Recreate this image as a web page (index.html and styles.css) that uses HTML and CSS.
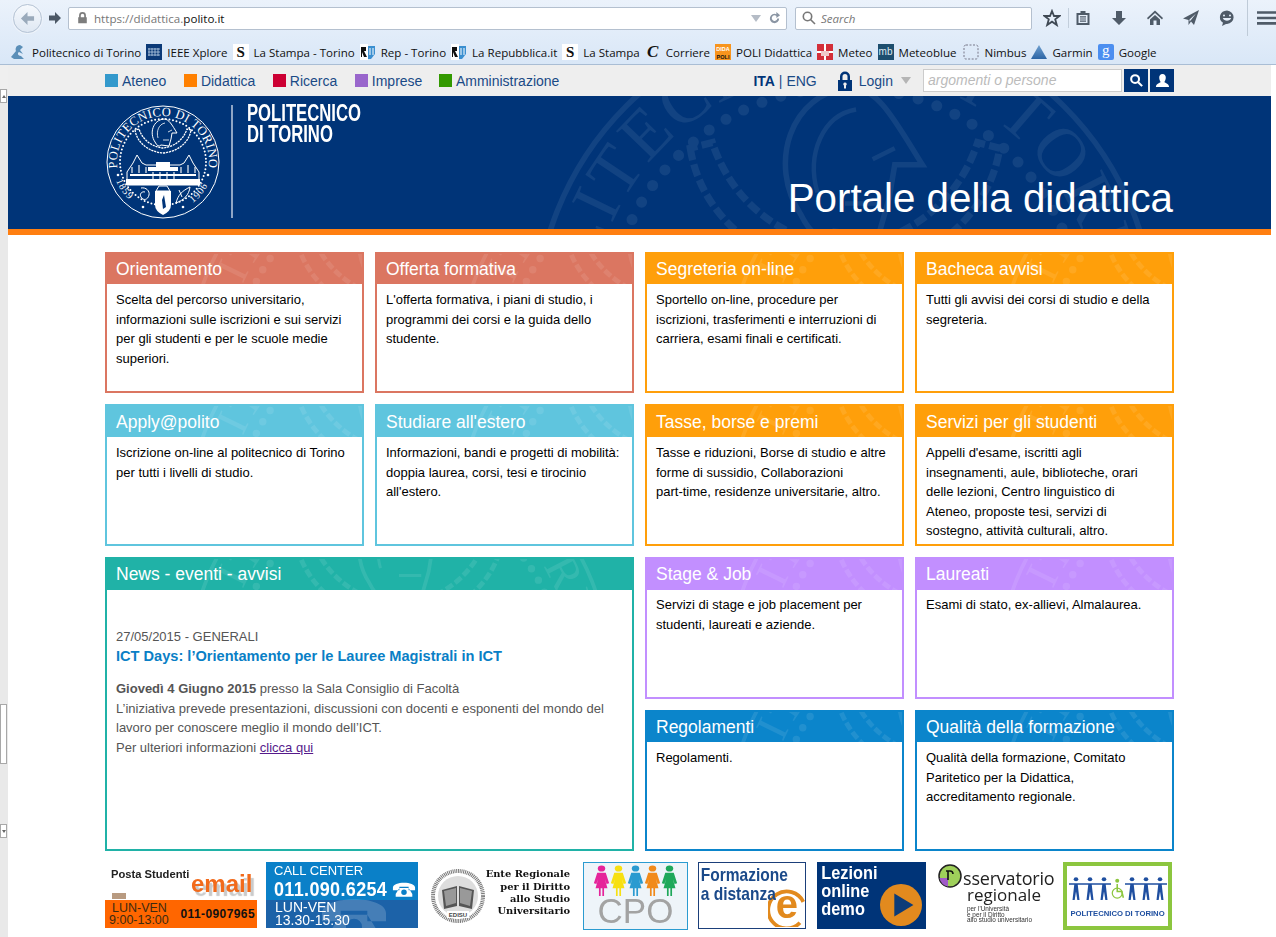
FILE: index.html
```html
<!DOCTYPE html>
<html lang="it">
<head>
<meta charset="utf-8">
<title>Portale della didattica</title>
<link rel="stylesheet" href="styles.css">
</head>
<body>
<svg class="defs" aria-hidden="true">
  <symbol id="seal" viewBox="0 0 114 114">
    <circle cx="57" cy="57" r="56" fill="none" stroke="currentColor" stroke-width="1"/>
    <circle cx="57" cy="57" r="43" fill="none" stroke="currentColor" stroke-width="2" stroke-linecap="round" stroke-dasharray="0 3.6"/>
    <path id="sealTop" d="M11.7 65A46 46 0 1 1 102.3 65" fill="none"/>
    <path id="sealLow" d="M7 62A50.2 50.2 0 0 0 107 62" fill="none"/>
    <text class="seal-text" fill="currentColor"><textPath href="#sealTop" startOffset="2" textLength="156">POLITECNICO DI TORINO</textPath></text>
    <text class="seal-year" fill="currentColor"><textPath href="#sealLow" startOffset="14">1859</textPath></text>
    <text class="seal-year" fill="currentColor"><textPath href="#sealLow" startOffset="106">1906</textPath></text>
    <path d="M49 37C43 28 47 15 58 14C63 14 66 20 71 28L66 28L65 34L63 41L55 40Q52 43 49 37Z" fill="none" stroke="currentColor" stroke-width="1"/>
    <path d="M52 33C50 26 53 19 59 18M62 27L66 25M57 35L63 35" fill="none" stroke="currentColor" stroke-width=".8"/>
    <path d="M29 25C31 38 43 47 57 48C71 47 83 38 85 25L81 24C77 36 67 42 57 43C47 42 37 36 33 24Z" fill="none" stroke="currentColor" stroke-width="1.3" stroke-dasharray="2.2 .8"/>
    <path d="M21 80V67L27 58L31 50L36 58L40 60H74L78 58L83 50L87 58L93 67V80Z" fill="none" stroke="currentColor" stroke-width="1"/>
    <path d="M20 80H94V74H20ZM24 71H90V69H24ZM42 66H72V62H42ZM50 62H64V57H50Z" fill="currentColor"/>
    <path d="M26 62V68M33 60V68M40 62V68M47 67V74M54 67V74M61 67V74M68 67V74M75 62V68M82 60V68M89 62V68" stroke="currentColor" stroke-width="1.1"/>
    <path d="M49 86H65V100Q65 106 57 110Q49 106 49 100Z" fill="currentColor"/>
    <path d="M50 86L53 81H61L64 86Z" fill="none" stroke="currentColor" stroke-width="1"/>
    <path d="M58 90L60 102L57 104L56 95Z" fill="#003478"/>
    <path d="M35 83C40 82 44 86 43 90C42 95 37 96 35 92C33 89 36 86 39 87" fill="none" stroke="currentColor" stroke-width="1"/>
    <path d="M70 98C72 90 76 86 84 82C83 90 78 95 70 98ZM73 85L76 92" fill="none" stroke="currentColor" stroke-width="1"/>
    <circle cx="12" cy="70" r="1.3" fill="currentColor"/><circle cx="102" cy="70" r="1.3" fill="currentColor"/>
    <circle cx="37" cy="102" r="1.3" fill="currentColor"/><circle cx="77" cy="102" r="1.3" fill="currentColor"/>
  </symbol>
  <symbol id="person" viewBox="0 0 20 44" preserveAspectRatio="none">
    <circle cx="10" cy="5" r="4.4" fill="currentColor"/>
    <path d="M5 11H15L19 26L16 27L14 20L17 33H13V44H11V33H9V44H7V33H3L6 20L4 27L1 26Z" fill="currentColor"/>
  </symbol>
  <symbol id="stick" viewBox="0 0 16 30" preserveAspectRatio="none">
    <circle cx="8" cy="3" r="2.6" fill="currentColor"/>
    <path d="M0 8H16V10H10L12 30H9.5L8 19L6.5 30H4L6 10H0Z" fill="currentColor"/>
  </symbol>
</svg>

<header class="chrome">
  <div class="toolbar">
    <div class="back"><svg class="back-arrow" viewBox="0 0 16 16"><path d="M8 1L1 8L8 15V10.5H15V5.5H8Z"/></svg></div>
    <svg class="fwd" viewBox="0 0 14 14"><path d="M7 1L13 7L7 13V9.5H1V4.5H7Z"/></svg>
    <div class="urlbar">
      <svg class="padlock" viewBox="0 0 12 14"><path d="M1 6H2V4A4 4 0 0 1 10 4V6H11V13H1ZM4 6H8V4A2 2 0 0 0 4 4Z"/></svg>
      <span class="url">https://didattica.<b>polito.it</b></span>
      <svg class="drop" viewBox="0 0 10 7"><path d="M0 0H10L5 7Z"/></svg>
      <svg class="reload" viewBox="0 0 14 14"><path d="M12 7A5 5 0 1 1 9 2.4V0L13 3.4L9 6.5V4.3A3 3 0 1 0 10 7Z"/></svg>
    </div>
    <div class="searchbar">
      <svg class="loupe" viewBox="0 0 14 14"><circle cx="5.5" cy="5.5" r="4.2"/><path d="M8.5 8.5L13 13"/></svg>
      <span>Search</span>
    </div>
    <div class="tools">
      <svg class="tool" viewBox="0 0 18 18"><path class="outline" d="M9 2L11 7H16.5L12.2 10.3L13.8 16L9 12.7L4.2 16L5.8 10.3L1.5 7H7Z"/></svg>
      <i class="tool-sep"></i>
      <svg class="tool" viewBox="0 0 18 18"><path d="M2.500 4H6.500V2H11.500V4H15.500V16H2.500ZM4.500 6V14H13.500V6ZM6 7.200H12V8.400H6ZM6 9.400H12V10.600H6ZM6 11.600H12V12.800H6Z"/></svg>
      <svg class="tool" viewBox="0 0 18 18"><path d="M6 2H12V9H16L9 16L2 9H6Z"/></svg>
      <svg class="tool" viewBox="0 0 18 18"><path d="M9 1.500L17 9L16 10.500L9 4L2 10.500L1 9ZM4 10.500L9 6L14 10.500V16H10.500V11.500H7.500V16H4Z"/></svg>
      <svg class="tool" viewBox="0 0 18 18"><path d="M17 1L12 16L9 12.500L6.500 16V11L1 9.500ZM7.500 10.500V12.500L9 11L14 4.500Z"/></svg>
      <svg class="tool" viewBox="0 0 18 18"><path d="M9 1.500A7.500 6.800 0 0 1 9 15H8L4 17L5 13.800A7.500 6.800 0 0 1 9 1.500ZM6 5.500A1 1 0 1 0 6 7.500A1 1 0 1 0 6 5.500ZM12 5.500A1 1 0 1 0 12 7.500A1 1 0 1 0 12 5.500ZM4.800 9C6 12.500 12 12.500 13.200 9Z" fill-rule="evenodd"/></svg>
      <i class="tool-sep tall"></i>
      <svg class="tool menu" viewBox="0 0 18 16"><path d="M0 1.500H18V4H0ZM0 6.700H18V9.200H0ZM0 11.900H18V14.400H0Z"/></svg>
    </div>
  </div>
  <nav class="bookmarks">
    <a class="bm bm-first"><svg class="fav" viewBox="0 0 16 16"><path d="M10 1C6 1 5 5 6 7L1 13L4 15H14L11 12C8 12 7 9 9 8L13 10L10 6L13 3Z" fill="#5b8fb8"/></svg>Politecnico di Torino</a>
    <a class="bm"><svg class="fav" viewBox="0 0 16 16"><rect width="16" height="16" fill="#0b3a78"/><path d="M3 4V12M6 4V12M9 4V12M12 4V12M2 5H14M2 8H14M2 11H14" stroke="#b9cfe6" stroke-width=".8"/></svg>IEEE Xplore</a>
    <a class="bm"><span class="fav-s">S</span>La Stampa - Torino</a>
    <a class="bm"><svg class="fav" viewBox="0 0 16 16"><rect width="8" height="16" fill="#fff"/><path d="M1 3H6V7H4L7 13H4L2 8V13H1Z" fill="#111"/><path d="M8 2H15V10L11 15H8Z" fill="#3a8fd0"/><path d="M10 4V11M13 4V11" stroke="#fff"/></svg>Rep - Torino</a>
    <a class="bm"><svg class="fav" viewBox="0 0 16 16"><rect width="8" height="16" fill="#fff"/><path d="M1 3H6V7H4L7 13H4L2 8V13H1Z" fill="#111"/><path d="M8 2H15V10L11 15H8Z" fill="#3a8fd0"/><path d="M10 4V11M13 4V11" stroke="#fff"/></svg>La Repubblica.it</a>
    <a class="bm"><span class="fav-s">S</span>La Stampa</a>
    <a class="bm"><span class="fav-c">C</span>Corriere</a>
    <a class="bm"><svg class="fav" viewBox="0 0 16 16"><rect width="16" height="16" fill="#f7941d"/><text x="8" y="7" class="fav-mini" fill="#fff">DIDA</text><text x="8" y="14.500" class="fav-mini" fill="#111">POLI</text></svg>POLI Didattica</a>
    <a class="bm"><svg class="fav" viewBox="0 0 16 16"><rect width="16" height="16" fill="#d32f3a"/><path d="M0 7H16V9H0ZM7 0H9V16H7Z" fill="#fff"/><path d="M4 7H12V12H4Z" fill="#f0c8c8"/></svg>Meteo</a>
    <a class="bm bm-wide"><span class="fav-mb">mb</span>Meteoblue</a>
    <a class="bm"><svg class="fav" viewBox="0 0 16 16"><rect x="1" y="1" width="14" height="14" rx="2" fill="none" stroke="#778" stroke-dasharray="2 1.500"/></svg>Nimbus</a>
    <a class="bm"><svg class="fav" viewBox="0 0 16 16"><defs><linearGradient id="garmin" x1="0" y1="0" x2="0" y2="1"><stop offset="0" stop-color="#6fa0d0"/><stop offset="1" stop-color="#2c65a5"/></linearGradient></defs><path d="M8 1L16 15H0Z" fill="url(#garmin)"/></svg>Garmin</a>
    <a class="bm"><span class="fav-g">g</span>Google</a>
  </nav>
</header>

<div class="viewport">
  <aside class="scroll">
    <div class="sb-top"></div>
    <div class="sb-btn sb-up"></div>
    <div class="sb-track1"></div>
    <div class="sb-thumb"></div>
    <div class="sb-track2"></div>
    <div class="sb-btn sb-down"></div>
  </aside>

  <div class="site">
    <div class="topnav">
      <ul class="sections">
        <li class="sec"><i class="sq sq-ateneo"></i>Ateneo</li>
        <li class="sec"><i class="sq sq-didattica"></i>Didattica</li>
        <li class="sec"><i class="sq sq-ricerca"></i>Ricerca</li>
        <li class="sec sec-imp"><i class="sq sq-imprese"></i>Imprese</li>
        <li class="sec"><i class="sq sq-amm"></i>Amministrazione</li>
      </ul>
      <div class="lang"><b>ITA</b> | ENG</div>
      <div class="login">
        <svg class="lock" viewBox="0 0 16 20"><path d="M1 9H3V5.500A5 5 0 0 1 13 5.500V9H15V20H1ZM5.500 9H10.500V5.500A2.500 2.500 0 0 0 5.500 5.500ZM8 11.500A1.700 1.700 0 0 0 7 14.600V17.500H9V14.600A1.700 1.700 0 0 0 8 11.500Z" fill-rule="evenodd"/></svg>
        <span>Login</span>
        <i class="caret"></i>
      </div>
      <div class="sitesearch">argomenti o persone</div>
      <div class="sq-btn"><svg viewBox="0 0 16 16"><circle cx="6.500" cy="6.500" r="4.200"/><path d="M9.800 9.800L14 14"/></svg></div>
      <div class="sq-btn"><svg viewBox="0 0 16 16"><path class="solid" d="M8 1C10.500 1 11.500 3 11.500 5C11.500 7 10.500 8.500 10 9.500C11 11 15 11 15 15H1C1 11 5 11 6 9.500C5.500 8.500 4.500 7 4.500 5C4.500 3 5.500 1 8 1Z"/></svg></div>
    </div>

    <div class="banner">
      <svg class="wm-big" aria-hidden="true"><use href="#seal"/></svg>
      <svg class="logo-seal" aria-hidden="true"><use href="#seal"/></svg>
      <i class="logo-rule"></i>
      <div class="logo-name">POLITECNICO<br>DI TORINO</div>
      <h1 class="portal">Portale della didattica</h1>
    </div>

    <main class="grid">
      <section class="card c-red"><h2><svg class="wm" aria-hidden="true"><use href="#seal"/></svg><span>Orientamento</span></h2><p>Scelta del percorso universitario, informazioni sulle iscrizioni e sui servizi per gli studenti e per le scuole medie superiori.</p></section>
      <section class="card c-red"><h2><svg class="wm" aria-hidden="true"><use href="#seal"/></svg><span>Offerta formativa</span></h2><p>L'offerta formativa, i piani di studio, i programmi dei corsi e la guida dello studente.</p></section>
      <section class="card c-orange"><h2><svg class="wm" aria-hidden="true"><use href="#seal"/></svg><span>Segreteria on-line</span></h2><p>Sportello on-line, procedure per iscrizioni, trasferimenti e interruzioni di carriera, esami finali e certificati.</p></section>
      <section class="card c-orange"><h2><svg class="wm" aria-hidden="true"><use href="#seal"/></svg><span>Bacheca avvisi</span></h2><p>Tutti gli avvisi dei corsi di studio e della segreteria.</p></section>

      <section class="card row2 c-cyan"><h2><svg class="wm" aria-hidden="true"><use href="#seal"/></svg><span>Apply@polito</span></h2><p>Iscrizione on-line al politecnico di Torino per tutti i livelli di studio.</p></section>
      <section class="card row2 c-cyan"><h2><svg class="wm" aria-hidden="true"><use href="#seal"/></svg><span>Studiare all'estero</span></h2><p>Informazioni, bandi e progetti di mobilità: doppia laurea, corsi, tesi e tirocinio all'estero.</p></section>
      <section class="card row2 c-orange"><h2><svg class="wm" aria-hidden="true"><use href="#seal"/></svg><span>Tasse, borse e premi</span></h2><p>Tasse e riduzioni, Borse di studio e altre forme di sussidio, Collaborazioni<br>part-time, residenze universitarie, altro.</p></section>
      <section class="card row2 c-orange"><h2><svg class="wm" aria-hidden="true"><use href="#seal"/></svg><span>Servizi per gli studenti</span></h2><p>Appelli d'esame, iscritti agli<br>insegnamenti, aule, biblioteche, orari<br>delle lezioni, Centro linguistico di<br>Ateneo, proposte tesi, servizi di<br>sostegno, attività culturali, altro.</p></section>

      <section class="card row3 c-teal news"><h2><svg class="wm" aria-hidden="true"><use href="#seal"/></svg><span>News - eventi - avvisi</span></h2>
        <div class="news-body">
          <div class="news-date">27/05/2015 - GENERALI</div>
          <a class="news-title">ICT Days: l’Orientamento per le Lauree Magistrali in ICT</a>
          <p class="news-text"><b>Giovedì 4 Giugno 2015</b> presso la Sala Consiglio di Facoltà<br>L’iniziativa prevede presentazioni, discussioni con docenti e esponenti del mondo del lavoro per conoscere meglio il mondo dell’ICT.<br>Per ulteriori informazioni <a class="news-link">clicca qui</a></p>
        </div>
      </section>
      <section class="card row3 c-purple"><h2><svg class="wm" aria-hidden="true"><use href="#seal"/></svg><span>Stage &amp; Job</span></h2><p>Servizi di stage e job placement per studenti, laureati e aziende.</p></section>
      <section class="card row3 c-purple"><h2><svg class="wm" aria-hidden="true"><use href="#seal"/></svg><span>Laureati</span></h2><p>Esami di stato, ex-allievi, Almalaurea.</p></section>
      <section class="card c-blue"><h2><svg class="wm" aria-hidden="true"><use href="#seal"/></svg><span>Regolamenti</span></h2><p>Regolamenti.</p></section>
      <section class="card c-blue"><h2><svg class="wm" aria-hidden="true"><use href="#seal"/></svg><span>Qualità della formazione</span></h2><p>Qualità della formazione, Comitato Paritetico per la Didattica, accreditamento regionale.</p></section>
    </main>

    <footer class="links">
      <div class="b b-email">
        <div class="em-top"><span class="em-posta">Posta Studenti</span><span class="em-word">email</span><i class="em-icon"></i></div>
        <div class="em-bar"><span class="em-hours">LUN-VEN<br><span class="em-time">9:00-13:00</span></span><b>011-0907965</b></div>
      </div>
      <div class="b b-call">
        <div class="cc-top">CALL CENTER<br><span class="cc-num">011.090.6254</span></div>
        <svg class="cc-phone" viewBox="0 0 26 18"><path d="M1 8C1 1 25 1 25 8V11H18V7H8V11H1ZM8 8.500H18L22 15V18H4V15ZM13 10A3 3 0 1 0 13 16A3 3 0 1 0 13 10Z" fill-rule="evenodd"/></svg>
        <svg class="cc-bigphone" viewBox="0 0 26 18"><path d="M1 8C1 1 25 1 25 8V11H18V7H8V11H1ZM8 8.500H18L22 15V18H4V15ZM13 10A3 3 0 1 0 13 16A3 3 0 1 0 13 10Z" fill-rule="evenodd"/></svg>
        <div class="cc-low">LUN-VEN<br>13.30-15.30</div>
      </div>
      <div class="b b-edisu">
        <svg class="ed-seal" viewBox="0 0 54 54"><circle cx="27" cy="27" r="25" fill="none" stroke="#777" stroke-width="4" stroke-dasharray="1 .8"/><circle cx="27" cy="27" r="20" fill="#ddd"/><path d="M11 21L26 17V37L13 40ZM28 17L43 21L41 40L28 37Z" fill="#555"/><path d="M13 22L25 19V34L15 37ZM29 19L41 22L39 37L29 34Z" fill="#999"/><rect x="16" y="42" width="22" height="7" fill="#fff"/><text x="27" y="48" class="ed-mark">EDISU</text></svg>
        <div class="ed-text">Ente Regionale<br>per il Diritto<br>allo Studio<br>Universitario</div>
      </div>
      <div class="b b-cpo">
        <div class="cpo-row">
          <svg class="cpo-p p1"><use href="#person"/></svg><svg class="cpo-p p2"><use href="#person"/></svg><svg class="cpo-p p3"><use href="#person"/></svg><svg class="cpo-p p4"><use href="#person"/></svg><svg class="cpo-p p5"><use href="#person"/></svg>
        </div>
        <div class="cpo-word">CPO</div>
      </div>
      <div class="b b-fad">
        <svg class="fad-ring" viewBox="0 0 44 50"><path d="M38 45A22 22 0 1 1 42 20" fill="none" stroke="#e28a1e" stroke-width="4.500"/></svg>
        <div class="fad-e">e</div>
        <div class="fad-text">Formazione<br>a distanza</div>
      </div>
      <div class="b b-lez">
        <div class="lez-text">Lezioni<br>online<br>demo</div>
        <svg class="lez-play" viewBox="0 0 44 44"><circle cx="22" cy="22" r="22" fill="#e28a1e"/><path d="M15 10L35 22L15 34Z" fill="#0d3c78"/></svg>
      </div>
      <div class="b b-oss">
        <div class="oss-head">
          <svg class="oss-o" viewBox="0 0 24 24"><circle cx="12" cy="12" r="11" fill="#9fd05a" stroke="#222" stroke-width="1.500"/><path d="M1.500 14H10V22.500A11 11 0 0 1 1.500 14Z" fill="#a05ac8"/><path d="M8 7H12Q15 7 15 10M10 7V16" fill="none" stroke="#111" stroke-width="1.600"/></svg>
          <span>sservatorio</span>
        </div>
        <div class="oss-word">regionale</div>
        <div class="oss-small">per l'Università<br>e per il Diritto<br>allo studio universitario</div>
      </div>
      <div class="b b-poli">
        <div class="poli-row">
          <svg class="st"><use href="#stick"/></svg><svg class="st"><use href="#stick"/></svg><svg class="st"><use href="#stick"/></svg>
          <svg class="wheel" viewBox="0 0 16 30"><circle cx="7" cy="5" r="2.600" fill="#8cc63f"/><path d="M7 9V19H13L15 27" fill="none" stroke="#8cc63f" stroke-width="2"/><circle cx="7" cy="21" r="6.500" fill="none" stroke="#8cc63f" stroke-width="1.600"/></svg>
          <svg class="st"><use href="#stick"/></svg><svg class="st"><use href="#stick"/></svg><svg class="st"><use href="#stick"/></svg>
        </div>
        <div class="poli-word">POLITECNICO DI TORINO</div>
      </div>
    </footer>
  </div>
</div>
</body>
</html>
```

FILE: styles.css
```css
* { box-sizing: border-box; }
html, body { margin: 0; height: 937px; overflow: hidden; background: #fff; }
body { font-family: "Liberation Sans", Arial, sans-serif; color: #000; }
.defs { position: absolute; width: 0; height: 0; }
ul { list-style: none; margin: 0; padding: 0; }
.seal-text { font: 12.5px "Liberation Serif", serif; }
.seal-year { font: 10px "Liberation Serif", serif; letter-spacing: 1px; }

/* browser chrome */
.chrome { height: 65px; background: linear-gradient(#ebf2fb, #d9e7f7); border-bottom: 1px solid #a9bdd4; }
.toolbar { height: 40px; display: flex; align-items: center; padding: 0 0 4px 13px; }
.back { width: 29px; height: 29px; flex: none; border-radius: 50%; border: 1px solid #b5c3d4; background: linear-gradient(#f6f9fd, #dfe8f3); display: flex; align-items: center; justify-content: center; box-shadow: 0 0 0 1px #eef3fa; }
.back-arrow { width: 15px; height: 15px; fill: #9aaabb; }
.fwd { width: 14px; height: 14px; flex: none; fill: #4c5866; margin: 0 5px 0 6px; }
.urlbar { width: 719px; height: 23px; flex: none; margin-left: 1px; background: #fff; border: 1px solid #b4c0cf; border-radius: 2px; display: flex; align-items: center; padding: 0 5px 0 8px; }
.padlock { width: 11px; height: 12px; fill: #7d7d7d; margin-right: 6px; }
.url { flex: 1; font: 11.6px "Open Sans", sans-serif; color: #777; }
.url b { font-weight: 400; color: #111; }
.drop { width: 10px; height: 7px; fill: #b5bcc6; margin-right: 7px; }
.reload { width: 13px; height: 13px; fill: #8a95a3; }
.searchbar { width: 237px; height: 23px; flex: none; margin-left: 8px; background: #fff; border: 1px solid #b4c0cf; border-radius: 2px; display: flex; align-items: center; padding: 0 6px; gap: 5px; font: italic 11.5px "Open Sans", sans-serif; color: #777; }
.loupe { width: 14px; height: 14px; fill: none; stroke: #777; stroke-width: 1.6; }
.tools { display: flex; align-items: center; margin-left: 11px; }
.tool { width: 18px; height: 18px; fill: #4f5b68; margin-right: 18px; flex: none; }
.tool .outline { fill: none; stroke: #3f4954; stroke-width: 1.8; }
.tool-sep { width: 1px; height: 20px; background: #c2cedb; margin: 0 5px 0 -11px; flex: none; }
.tool-sep.tall { height: 36px; margin: 0 9px 0 -7px; background: #bfcbd8; }
.tool.menu { margin: 0; width: 19px; }

.bookmarks { height: 24px; display: flex; align-items: center; padding-left: 10px; font: 11.55px "Open Sans", sans-serif; color: #111; }
.bm { display: flex; align-items: center; gap: 5px; margin-right: 5px; white-space: nowrap; }
.bm-first { gap: 6px; }
.bm-wide { margin-right: 7px; }
.fav { width: 16px; height: 16px; flex: none; }
.fav-mini { font: bold 5.5px "Liberation Sans", sans-serif; text-anchor: middle; }
.fav-s { width: 16px; height: 16px; background: #fff; font: bold 15px/16px "Liberation Serif", serif; text-align: center; }
.fav-c { width: 16px; height: 16px; font: italic bold 17px/16px "Liberation Serif", serif; text-align: center; }
.fav-mb { width: 16px; height: 16px; background: #1d4e6e; color: #dfe9ef; font: 10px/16px "Liberation Sans", sans-serif; text-align: center; }
.fav-g { width: 16px; height: 16px; border-radius: 2px; background: #4b8ef0; color: #fff; font: 15px/13px "Liberation Serif", serif; text-align: center; }

/* window */
.viewport { display: flex; height: 872px; }
.scroll { width: 8px; flex: none; display: flex; flex-direction: column; background: #e9e9e9; }
.sb-top { height: 24px; background: #efefef; }
.sb-btn { height: 14px; width: 7px; background: #fff; border: 1px solid #a8a8a8; flex: none; display: flex; align-items: center; justify-content: center; }
.sb-btn::after { content: ""; border: 2px solid transparent; border-bottom: 3px solid #666; border-top: 0; }
.sb-down::after { border-top: 3px solid #666; border-bottom: 0; }
.sb-track1 { height: 601px; flex: none; }
.sb-thumb { height: 60px; width: 7px; background: #fff; border: 1px solid #a8a8a8; flex: none; }
.sb-track2 { height: 60px; flex: none; }
.site { width: 1263px; flex: none; }

.topnav { height: 31px; background: #eee; display: flex; align-items: center; padding: 0 97px; font-size: 14px; color: #1a4a86; }
.sections { display: flex; flex: 1; gap: 17.5px; }
.sec { display: flex; align-items: center; gap: 4px; }
.sec-imp { margin-right: -1px; }
.sq { width: 13px; height: 13px; display: block; }
.sq-ateneo { background: #3399cc; }
.sq-didattica { background: #ff8000; }
.sq-ricerca { background: #cc0033; }
.sq-imprese { background: #9966cc; }
.sq-amm { background: #339900; }
.lang { margin-right: 20px; }
.lang b { color: #003478; }
.login { display: flex; align-items: center; margin-right: 12px; }
.lock { width: 16px; height: 20px; fill: #003478; margin-right: 6px; }
.caret { width: 0; height: 0; margin-left: 8px; border: 5.5px solid transparent; border-top: 7px solid #b5b5b5; border-bottom: 0; }
.sitesearch { width: 199px; height: 23px; background: #fff; border: 1px solid #ccc; font: italic 14px/21px "Liberation Sans", sans-serif; color: #bbb; padding-left: 4px; margin-right: 2px; }
.sq-btn { width: 24px; height: 23px; background: #003478; display: flex; align-items: center; justify-content: center; }
.sq-btn + .sq-btn { margin-left: 2px; }
.sq-btn svg { width: 15px; height: 15px; fill: none; stroke: #fff; stroke-width: 2.2; }
.sq-btn .solid { fill: #fff; stroke: none; }

.banner { position: relative; height: 139px; background: #003478; border-bottom: 6px solid #ff7f11; padding: 9px 98px 0 98px; display: flex; overflow: hidden; }
.wm-big { position: absolute; left: 522px; top: -86px; width: 630px; height: 630px; color: #fff; opacity: .07; }
.logo-seal { width: 114px; height: 114px; color: #fff; flex: none; position: relative; }
.logo-rule { width: 2px; height: 113px; background: #8fa5c5; margin-left: 11px; flex: none; position: relative; }
.logo-name { width: 160px; margin: -2px -46px 0 14px; font: bold 23px/21px "Liberation Sans", sans-serif; color: #fff; flex: none; position: relative; transform: scaleX(.725); transform-origin: left top; white-space: nowrap; }
.portal { position: relative; margin: auto 0 7px auto; font-size: 40.3px; line-height: 46px; font-weight: 400; color: #fff; white-space: nowrap; }

/* cards */
.grid { display: grid; grid-template-columns: repeat(4, 259px); grid-template-rows: 141px 142px 142px 141px; gap: 11px; padding: 17px 97px 0; }
.card { border: 2px solid var(--c); background: #fff; overflow: hidden; }
.card h2 { position: relative; overflow: hidden; margin: -2px -2px 0; height: 32px; padding-left: 11px; background: var(--c); color: #fff; font-size: 17.5px; line-height: 34px; font-weight: 400; white-space: nowrap; }
.card h2 span { position: relative; }
.card p { margin: 0; padding: 6px 9px 0; font-size: 13px; line-height: 19.6px; }
.row2 h2 { height: 33px; line-height: 36px; }
.row3 h2 { height: 33px; }
.row3 p { padding-top: 5px; }
.wm { position: absolute; left: 83px; top: -111px; width: 422px; height: 422px; color: #fff; opacity: .09; }
.c-red { --c: #db7661; }
.c-orange { --c: #ff9f0a; }
.c-cyan { --c: #5fc5de; }
.c-teal { --c: #20b2a7; }
.c-purple { --c: #c28fff; }
.c-blue { --c: #0b85cb; }
.news { grid-column: 1 / span 2; grid-row: 3 / span 2; }
.news-body { padding: 37px 9px 0; font-size: 13px; color: #555; }
.news-date { line-height: 19px; }
.news-title { display: block; font-weight: 700; font-size: 14.6px; line-height: 20px; color: #0a7fc6; }
.card .news-text { padding: 13px 0 0; line-height: 19.6px; color: #555; }
.news-link { color: #551a8b; text-decoration: underline; }

/* footer links */
.links { display: flex; align-items: flex-start; padding: 11px 0 0 97px; }
.b { flex: none; height: 68px; position: relative; overflow: hidden; filter: blur(.35px); }
.b-email { width: 152px; margin-right: 9px; height: 66px; }
.em-top { height: 38px; position: relative; }
.em-posta { position: absolute; left: 6px; top: 6px; font: bold 11.2px "Liberation Sans", sans-serif; color: #222; white-space: nowrap; }
.em-word { position: absolute; left: 86px; top: 9px; font: bold 24px/26px "Liberation Sans", sans-serif; color: #f26a1b; text-shadow: 3px 4px 1px #c9c9c9; }
.em-icon { position: absolute; left: 7px; top: 31px; width: 14px; height: 6px; background: #b89a80; }
.em-bar { height: 28px; background: #ff6600; display: flex; justify-content: space-between; align-items: center; padding: 0 2px 0 4px; font-size: 12.5px; color: #3d2a10; }
.em-hours { line-height: 12px; padding-left: 3px; }
.em-time { margin-left: -3px; }
.em-bar b { color: #111; font-size: 12px; letter-spacing: .4px; }
.b-call { width: 152px; margin-right: 13px; height: 66px; background: #1c62a8; color: #fff; }
.cc-top { height: 38px; background: #0a80c8; padding: 1px 0 0 8px; font-size: 13px; line-height: 15px; }
.cc-num { display: inline-block; font: bold 21px/21px "Liberation Sans", sans-serif; letter-spacing: .4px; white-space: nowrap; transform: scaleX(.857); transform-origin: left center; }
.cc-phone { position: absolute; left: 126px; top: 18px; width: 24px; height: 17px; fill: #fff; }
.cc-bigphone { position: absolute; left: 52px; top: 30px; width: 72px; height: 48px; fill: #fff; opacity: .18; }
.cc-low { position: relative; padding: 1px 0 0 9px; font-size: 14px; line-height: 13px; }
.b-edisu { width: 141px; margin-right: 11px; display: flex; align-items: center; justify-content: space-between; }
.ed-seal { width: 54px; height: 54px; flex: none; }
.ed-mark { font: bold 6px "Liberation Sans", sans-serif; text-anchor: middle; fill: #444; }
.ed-text { font: bold 9.9px/12.3px "DejaVu Serif", serif; text-align: right; color: #111; padding: 0 2px 6px 0; white-space: nowrap; }
.b-cpo { width: 105px; margin-right: 10px; background: #eef4f9; border: 1px solid #2b9bd0; text-align: center; padding-top: 2px; }
.cpo-row { display: flex; justify-content: center; height: 31px; }
.cpo-p { width: 17px; height: 31px; }
.p1 { color: #e5249a; }
.p2 { color: #f7e012; }
.p3 { color: #2a9ad0; }
.p4 { color: #f18a1a; }
.p5 { color: #1fa85a; }
.cpo-word { font-size: 35px; line-height: 30px; color: #a3a3a3; }
.b-fad { width: 108px; margin-right: 11px; height: 67px; border: 1px solid #1b3f7a; background: #fff; }
.fad-text { position: relative; padding: 2px 0 0 2px; font: bold 18.5px/19px "Liberation Sans", sans-serif; color: #1b4a8a; white-space: nowrap; transform: scaleX(.84); transform-origin: left top; }
.fad-ring { position: absolute; right: 0; top: 22px; width: 37px; height: 42px; }
.fad-e { position: absolute; right: 7px; top: 21px; font: bold 40px/40px "Liberation Sans", sans-serif; color: #e28a1e; }
.b-lez { width: 109px; margin-right: 12px; height: 67px; background: #003478; }
.lez-text { padding: 2px 0 0 5px; font: bold 19px/18px "Liberation Sans", sans-serif; color: #fff; transform: scaleX(.86); transform-origin: left top; }
.lez-play { position: absolute; right: 4px; top: 22px; width: 42px; height: 42px; }
.b-oss { width: 117px; margin-right: 8px; padding-top: 2px; }
.oss-head { display: flex; align-items: center; height: 24px; font: 18px/20px "Open Sans", sans-serif; letter-spacing: -.2px; color: #222; }
.oss-head span { padding-top: 4px; margin-left: 1px; }
.oss-o { width: 24px; height: 24px; flex: none; }
.oss-word { margin: -2px 0 0 29px; font: 17px/18px "Open Sans", sans-serif; color: #222; }
.oss-small { margin: 2px 0 0 29px; font: 6.4px/5.6px "Liberation Sans", sans-serif; color: #333; white-space: nowrap; }
.b-poli { width: 109px; border: 4px solid #8cc63f; background: #fff; padding-top: 11px; text-align: center; }
.poli-row { display: flex; justify-content: center; height: 23px; color: #1f4fa0; }
.st { width: 14px; height: 23px; }
.wheel { width: 14px; height: 23px; }
.poli-word { margin-top: 9px; font: bold 7.7px "Liberation Sans", sans-serif; color: #1f4fa0; white-space: nowrap; }
```
